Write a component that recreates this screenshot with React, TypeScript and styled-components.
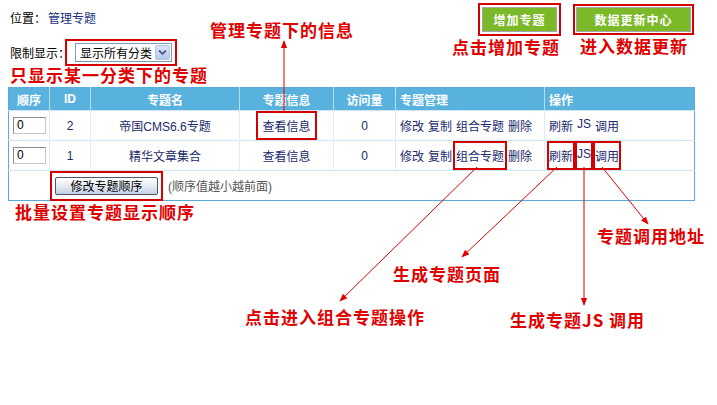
import React from 'react';
import styled, { createGlobalStyle } from 'styled-components';

const GlobalStyle = createGlobalStyle`
  html, body {
    margin: 0;
    padding: 0;
    background: #fff;
  }
  body {
    font-family: 'Liberation Sans', 'Noto Sans CJK SC', sans-serif;
    font-size: 12px;
    color: #000;
  }
`;

const Page = styled.div`
  position: relative;
  width: 717px;
  height: 405px;
  overflow: hidden;
  box-sizing: border-box;
  padding: 7px 0 0 8px;
`;

const TopBar = styled.div`
  width: 686px;
  display: flex;
  justify-content: space-between;
  align-items: flex-start;
  box-sizing: border-box;
  padding: 0 3px 0 2px;
`;

const Location = styled.div`
  line-height: 25px;
  a {
    color: #1a2f7a;
    text-decoration: none;
    margin-left: 2px;
  }
`;

const ButtonGroup = styled.div`
  display: flex;
  gap: 19px;
`;

const GreenButton = styled.div<{ $w: number }>`
  width: ${(p) => p.$w}px;
  height: 25px;
  box-sizing: border-box;
  border: 1px solid #a7a7a7;
  background: #7cb928;
  color: #fff;
  font-weight: 700;
  font-size: 12px;
  display: flex;
  align-items: center;
  justify-content: center;
  letter-spacing: 1px;
`;

const FilterRow = styled.div`
  margin-top: 11px;
  padding-left: 2px;
  display: flex;
  align-items: center;
  height: 19px;
`;

const SelectBox = styled.div`
  margin-left: 5px;
  width: 97px;
  height: 19px;
  box-sizing: border-box;
  border: 1px solid #7f9db9;
  display: flex;
  align-items: center;
  justify-content: space-between;
  padding: 0 1px 0 4px;
  background: #fff;
`;

const DropButton = styled.div`
  width: 15px;
  height: 15px;
  box-sizing: border-box;
  border: 1px solid #b3c2e0;
  border-radius: 2px;
  background: linear-gradient(#dbe5f8, #b6c8ec);
  display: flex;
  align-items: center;
  justify-content: center;
`;

const Table = styled.table`
  margin-top: 25px;
  width: 686px;
  border-collapse: collapse;
  table-layout: fixed;
  border: 1px solid #5aacd8;
`;

const HeadCell = styled.th<{ $left?: boolean }>`
  height: 22px;
  padding: 0 0 0 ${(p) => (p.$left ? '4px' : '0')};
  background: #59b2de;
  color: #fff;
  font-weight: 700;
  font-size: 12px;
  text-align: ${(p) => (p.$left ? 'left' : 'center')};
  border-left: 1px solid #b9def2;
  &:first-child {
    border-left: none;
  }
`;

const Cell = styled.td<{ $left?: boolean }>`
  height: 29px;
  padding: 0 0 0 ${(p) => (p.$left ? '4px' : '0')};
  color: #1a2a6c;
  text-align: ${(p) => (p.$left ? 'left' : 'center')};
  border-top: 1px solid #cfe5f3;
  border-left: 1px solid #dcedf7;
  white-space: nowrap;
  &:first-child {
    border-left: none;
  }
`;

const OrderInput = styled.div`
  width: 33px;
  height: 17px;
  box-sizing: border-box;
  border: 1px solid #8c8c8c;
  border-right-color: #c6c6c6;
  border-bottom-color: #c6c6c6;
  padding-left: 3px;
  line-height: 15px;
  color: #000;
  background: #fff;
`;

const FootCell = styled.td`
  height: 29px;
  padding: 0 0 0 46px;
  border-top: 1px solid #cfe5f3;
`;

const FootInner = styled.div`
  display: flex;
  align-items: center;
  gap: 10px;
  color: #555;
`;

const GrayButton = styled.div`
  width: 103px;
  height: 18px;
  box-sizing: border-box;
  border: 1px solid #4d5a6e;
  border-radius: 2px;
  background: linear-gradient(#ffffff, #e6ecf5 50%, #c3cfe2);
  color: #000;
  display: flex;
  align-items: center;
  justify-content: center;
`;

const Links = styled.span`
  display: inline-flex;
  gap: 4px;
`;

const Mark = styled.span<{ $x: number; $y: number }>`
  position: relative;
  display: inline-block;
  &::after {
    content: '';
    position: absolute;
    left: -${(p) => p.$x}px;
    right: -${(p) => p.$x}px;
    top: -${(p) => p.$y}px;
    bottom: -${(p) => p.$y}px;
    border: 2px solid #d40000;
    pointer-events: none;
  }
`;

const Note = styled.div<{ $x: number; $y: number }>`
  position: absolute;
  left: ${(p) => p.$x}px;
  top: ${(p) => p.$y}px;
  color: #e00000;
  font-family: 'Noto Sans CJK SC', sans-serif;
  font-weight: 700;
  font-size: 17px;
  line-height: 18px;
  letter-spacing: 1px;
  white-space: nowrap;
`;

const ArrowLayer = styled.svg`
  position: absolute;
  left: 0;
  top: 0;
  pointer-events: none;
`;

const arrows: [number, number, number, number][] = [
  [284, 113, 284, 41],
  [477, 167, 340, 301],
  [557, 167, 462, 257],
  [584, 167, 584, 305],
  [602, 167, 648, 224],
];

const notes: [number, number, string][] = [
  [210, 21, '管理专题下的信息'],
  [452, 38, '点击增加专题'],
  [580, 37, '进入数据更新'],
  [10, 66, '只显示某一分类下的专题'],
  [15, 203, '批量设置专题显示顺序'],
  [597, 227, '专题调用地址'],
  [393, 265, '生成专题页面'],
  [245, 308, '点击进入组合专题操作'],
  [510, 311, '生成专题JS 调用'],
];

const rows = [
  { id: 2, name: '帝国CMS6.6专题', mark: false },
  { id: 1, name: '精华文章集合', mark: true },
];

export default function App() {
  return (
    <>
      <GlobalStyle />
      <Page>
        <TopBar>
          <Location>
            位置：<a href="#">管理专题</a>
          </Location>
          <ButtonGroup>
            <Mark $x={4} $y={4}>
              <GreenButton $w={75}>增加专题</GreenButton>
            </Mark>
            <Mark $x={3} $y={3}>
              <GreenButton $w={115}>数据更新中心</GreenButton>
            </Mark>
          </ButtonGroup>
        </TopBar>

        <FilterRow>
          限制显示：
          <Mark $x={5} $y={4}>
            <SelectBox>
              显示所有分类
              <DropButton>
                <svg width="9" height="7" viewBox="0 0 9 7">
                  <path d="M1 1.5 L4.5 5 L8 1.5" fill="none" stroke="#4d6185" strokeWidth="1.8" />
                </svg>
              </DropButton>
            </SelectBox>
          </Mark>
        </FilterRow>

        <Table>
          <colgroup>
            <col style={{ width: 41 }} />
            <col style={{ width: 41 }} />
            <col style={{ width: 149 }} />
            <col style={{ width: 94 }} />
            <col style={{ width: 62 }} />
            <col style={{ width: 149 }} />
            <col style={{ width: 150 }} />
          </colgroup>
          <thead>
            <tr>
              <HeadCell>顺序</HeadCell>
              <HeadCell>ID</HeadCell>
              <HeadCell>专题名</HeadCell>
              <HeadCell>专题信息</HeadCell>
              <HeadCell>访问量</HeadCell>
              <HeadCell $left>专题管理</HeadCell>
              <HeadCell $left>操作</HeadCell>
            </tr>
          </thead>
          <tbody>
            {rows.map((r) => (
              <tr key={r.id}>
                <Cell $left>
                  <OrderInput>0</OrderInput>
                </Cell>
                <Cell>{r.id}</Cell>
                <Cell>{r.name}</Cell>
                <Cell>
                  {r.mark ? (
                    '查看信息'
                  ) : (
                    <Mark $x={6} $y={6}>
                      查看信息
                    </Mark>
                  )}
                </Cell>
                <Cell>0</Cell>
                <Cell $left>
                  <Links>
                    <span>修改</span>
                    <span>复制</span>
                    {r.mark ? (
                      <Mark $x={3} $y={6}>
                        组合专题
                      </Mark>
                    ) : (
                      <span>组合专题</span>
                    )}
                    <span>删除</span>
                  </Links>
                </Cell>
                <Cell $left>
                  <Links>
                    {r.mark ? (
                      <>
                        <Mark $x={2} $y={6}>刷新</Mark>
                        <Mark $x={2} $y={6}>JS</Mark>
                        <Mark $x={2} $y={6}>调用</Mark>
                      </>
                    ) : (
                      <>
                        <span>刷新</span>
                        <span>JS</span>
                        <span>调用</span>
                      </>
                    )}
                  </Links>
                </Cell>
              </tr>
            ))}
            <tr>
              <FootCell colSpan={7}>
                <FootInner>
                  <Mark $x={5} $y={6}>
                    <GrayButton>修改专题顺序</GrayButton>
                  </Mark>
                  (顺序值越小越前面)
                </FootInner>
              </FootCell>
            </tr>
          </tbody>
        </Table>

        <ArrowLayer width="717" height="405" viewBox="0 0 717 405">
          <defs>
            <marker id="head" viewBox="0 0 10 10" refX="9" refY="5" markerWidth="8" markerHeight="8" orient="auto">
              <path d="M0 1 L10 5 L0 9 Z" fill="#e00000" />
            </marker>
          </defs>
          {arrows.map(([x1, y1, x2, y2], i) => (
            <line key={i} x1={x1} y1={y1} x2={x2} y2={y2} stroke="#e00000" strokeWidth="1" markerEnd="url(#head)" />
          ))}
        </ArrowLayer>

        {notes.map(([x, y, t]) => (
          <Note key={t} $x={x} $y={y}>
            {t}
          </Note>
        ))}
      </Page>
    </>
  );
}
